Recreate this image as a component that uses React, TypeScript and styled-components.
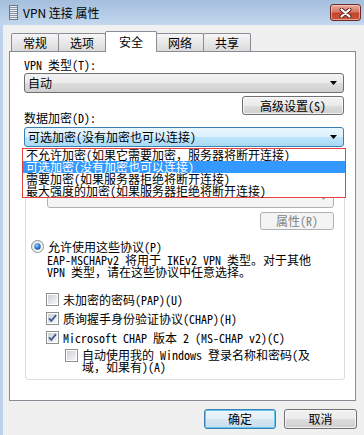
import React from "react";
import styled, { createGlobalStyle, css } from "styled-components";

const Global = createGlobalStyle`
  html, body { margin: 0; padding: 0; }
  body { width: 364px; height: 435px; overflow: hidden; background: #f0f0f0; }
  * { box-sizing: border-box; }
`;

const FONT = `"Noto Sans CJK SC", "Liberation Sans", sans-serif`;

const Window = styled.div`
  width: 364px;
  height: 435px;
  display: flex;
  flex-direction: column;
  background: #f0f0f0;
  font-family: ${FONT};
  font-size: 12px;
  line-height: 12px;
  color: #000;
  overflow: hidden;
  font-feature-settings: "hwid" 1;
`;

/* full-width punctuation keeps its full width */
const Wide = styled.span`
  font-feature-settings: normal;
`;

const TitleBar = styled.div`
  height: 25px;
  flex: none;
  display: flex;
  align-items: center;
  padding-left: 9px;
  background: linear-gradient(#a4bedd, #c3d8ee);
`;

const TitleText = styled.span`
  margin-left: 5px;
  font-size: 12px;
  line-height: 14px;
  font-feature-settings: normal;
  color: #000;
`;

const CloseButton = styled.div`
  margin-left: auto;
  margin-right: 3px;
  width: 31px;
  height: 17px;
  border: 1px solid #6b2b24;
  border-radius: 3px;
  display: flex;
  align-items: center;
  justify-content: center;
  background: linear-gradient(#e8aa9c 0%, #d47a66 45%, #c2452e 55%, #c9553a 100%);
  box-shadow: inset 0 0 0 1px rgba(255, 220, 210, 0.55);
`;

const Body = styled.div`
  flex: 1;
  display: flex;
  flex-direction: column;
  border-left: 3px solid #bdd3ec;
  padding: 6px 0 0 6px;
`;

const TabRow = styled.div`
  display: flex;
  align-items: flex-end;
  height: 20px;
  padding-left: 2px;
  position: relative;
  z-index: 2;
`;

const Tab = styled.div<{ $active?: boolean }>`
  width: 48px;
  height: 18px;
  margin-left: -1px;
  border: 1px solid #898c95;
  border-bottom: none;
  border-radius: 2px 2px 0 0;
  display: flex;
  align-items: center;
  justify-content: center;
  padding-top: 1px;
  background: linear-gradient(#f6f6f6, #dadada);
  &:first-child { margin-left: 0; }
  ${(p) =>
    p.$active &&
    css`
      width: 52px;
      height: 21px;
      margin-bottom: -1px;
      padding-top: 0;
      padding-bottom: 1px;
      background: #fff;
    `}
`;

const Panel = styled.div`
  width: 347px;
  height: 350px;
  flex: none;
  border: 1px solid #898c95;
  background: #fff;
  padding: 7px 11px 0 14px;
  display: flex;
  flex-direction: column;
  position: relative;
  z-index: 1;
`;

const Label = styled.div<{ $gap?: number }>`
  height: 12px;
  white-space: nowrap;
  margin-top: ${(p) => p.$gap ?? 0}px;
`;

const Combo = styled.div<{ $gap?: number; $variant?: "normal" | "focused" | "disabled" }>`
  height: 20px;
  border-radius: 3px;
  display: flex;
  align-items: center;
  padding: 0 6px 0 3px;
  white-space: nowrap;
  margin-top: ${(p) => p.$gap ?? 0}px;
  border: 1px solid #707070;
  background: linear-gradient(#f2f2f2 0%, #ebebeb 50%, #dddddd 50%, #cfcfcf 100%);
  ${(p) =>
    p.$variant === "focused" &&
    css`
      border-color: #3c7fb1;
      background: linear-gradient(#eaf6fd 0%, #d9f0fc 50%, #bee6fd 50%, #a7d9f5 100%);
    `}
  ${(p) =>
    p.$variant === "disabled" &&
    css`
      margin-left: 16px;
      margin-right: 10px;
      border-color: #adb2b5;
      background: #f4f4f4;
      color: #838383;
    `}
`;

const ComboText = styled.span`
  flex: 1;
`;

const Button = styled.div<{ $width: number; $height?: number; $disabled?: boolean; $default?: boolean }>`
  width: ${(p) => p.$width}px;
  height: ${(p) => p.$height ?? 20}px;
  flex: none;
  border: 1px solid #707070;
  border-radius: 3px;
  display: flex;
  align-items: center;
  justify-content: center;
  white-space: nowrap;
  background: linear-gradient(#f2f2f2 0%, #ebebeb 50%, #dddddd 50%, #cfcfcf 100%);
  box-shadow: inset 0 0 0 1px rgba(255, 255, 255, 0.7);
  ${(p) =>
    p.$disabled &&
    css`
      border-color: #adb2b5;
      background: #f4f4f4;
      color: #838383;
      box-shadow: none;
    `}
  ${(p) =>
    p.$default &&
    css`
      border-color: #3c7fb1;
      background: linear-gradient(#eef6fb 0%, #e3eff7 50%, #d4e6f2 50%, #c8ddeb 100%);
      box-shadow: inset 0 0 0 1px #60c8f4;
    `}
`;

const RightRow = styled.div<{ $gap?: number; $inset?: number }>`
  display: flex;
  justify-content: flex-end;
  margin-top: ${(p) => p.$gap ?? 0}px;
  margin-right: ${(p) => p.$inset ?? 0}px;
`;

const ComboWrap = styled.div<{ $gap?: number }>`
  position: relative;
  margin-top: ${(p) => p.$gap ?? 0}px;
`;

const DropList = styled.div`
  position: absolute;
  top: calc(100% + 1px);
  left: -2px;
  right: -2px;
  z-index: 10;
  background: #fff;
  border: 1px solid #e8413f;
  display: flex;
  flex-direction: column;
`;

const DropItem = styled.div<{ $selected?: boolean }>`
  height: 12px;
  padding-left: 3px;
  white-space: nowrap;
  ${(p) =>
    p.$selected &&
    css`
      background: #3399ff;
      color: #fff;
    `}
`;

const GroupBox = styled.div`
  margin: 3px -1px 0 1px;
  border: 1px solid #d5dfe5;
  border-radius: 3px;
  padding: 18px 0 6px 5px;
  display: flex;
  flex-direction: column;
`;

const OptionRow = styled.div<{ $gap?: number; $indent?: number }>`
  display: flex;
  align-items: flex-start;
  gap: 4px;
  margin-top: ${(p) => p.$gap ?? 0}px;
  margin-left: ${(p) => p.$indent ?? 0}px;
  white-space: nowrap;
  line-height: 12px;
  & > svg { flex: none; }
`;

const OptionText = styled.span<{ $lines?: number }>`
  padding-top: ${(p) => ((p.$lines ?? 1) > 1 ? 0 : 1)}px;
`;

const Description = styled.div<{ $gap?: number }>`
  margin: ${(p) => p.$gap ?? 0}px 0 0 16px;
  line-height: 12px;
  white-space: nowrap;
`;

const Footer = styled.div`
  display: flex;
  justify-content: flex-end;
  gap: 8px;
  margin-top: 8px;
  padding-right: 7px;
`;

const Arrow = ({ color = "#000" }: { color?: string }) => (
  <svg width="7" height="4" viewBox="0 0 7 4">
    <path d="M0 0 H7 L3.5 4 Z" fill={color} />
  </svg>
);

const Radio = ({ checked }: { checked?: boolean }) => (
  <svg width="13" height="13" viewBox="0 0 13 13">
    <defs>
      <linearGradient id="rbg" x1="0" y1="0" x2="1" y2="1">
        <stop offset="0" stopColor="#e4e4e4" />
        <stop offset="1" stopColor="#ffffff" />
      </linearGradient>
      <radialGradient id="rdot" cx="0.4" cy="0.35" r="0.7">
        <stop offset="0" stopColor="#8ad0ff" />
        <stop offset="0.6" stopColor="#2d7bd0" />
        <stop offset="1" stopColor="#134c94" />
      </radialGradient>
    </defs>
    <circle cx="6.5" cy="6.5" r="6" fill="url(#rbg)" stroke="#8e8f8f" />
    {checked && <circle cx="6.5" cy="6.5" r="3.2" fill="url(#rdot)" />}
  </svg>
);

const Check = ({ checked }: { checked?: boolean }) => (
  <svg width="13" height="13" viewBox="0 0 13 13">
    <defs>
      <linearGradient id="cbg" x1="0" y1="0" x2="1" y2="1">
        <stop offset="0" stopColor="#cbcfd5" />
        <stop offset="1" stopColor="#f7f7f7" />
      </linearGradient>
    </defs>
    <rect x="0.5" y="0.5" width="12" height="12" fill="#fff" stroke="#8e8f8f" />
    <rect x="2" y="2" width="9" height="9" fill="url(#cbg)" />
    {checked && (
      <path d="M3 6.3 L5.3 8.8 L10 3.2" fill="none" stroke="#3f5c95" strokeWidth="1.8" />
    )}
  </svg>
);

const AppIcon = () => (
  <svg width="9" height="15" viewBox="0 0 9 15">
    <rect x="0.5" y="0.5" width="8" height="14" fill="#e8ecf0" stroke="#6f7782" />
    {[2, 4, 6, 8, 10, 12].map((y) => (
      <rect key={y} x="1" y={y} width="7" height="1" fill="#8d96a3" />
    ))}
  </svg>
);

const CloseGlyph = () => (
  <svg width="13" height="10" viewBox="0 0 13 10">
    <path d="M2.5 1.5 L10.5 8.5 M10.5 1.5 L2.5 8.5" stroke="#5b231b" strokeWidth="4" strokeLinecap="round" />
    <path d="M2.5 1.5 L10.5 8.5 M10.5 1.5 L2.5 8.5" stroke="#fff" strokeWidth="2.2" strokeLinecap="round" />
  </svg>
);

const tabs = ["常规", "选项", "安全", "网络", "共享"];

const encryptionOptions: React.ReactNode[] = [
  <>不允许加密(如果它需要加密<Wide>，</Wide>服务器将断开连接)</>,
  <>可选加密(没有加密也可以连接)</>,
  <>需要加密(如果服务器拒绝将断开连接)</>,
  <>最大强度的加密(如果服务器拒绝将断开连接)</>,
];

export default function App() {
  return (
    <>
      <Global />
      <Window>
        <TitleBar>
          <AppIcon />
          <TitleText>VPN 连接 属性</TitleText>
          <CloseButton>
            <CloseGlyph />
          </CloseButton>
        </TitleBar>
        <Body>
          <TabRow>
            {tabs.map((t) => (
              <Tab key={t} $active={t === "安全"}>
                {t}
              </Tab>
            ))}
          </TabRow>
          <Panel>
            <Label>VPN 类型(T):</Label>
            <Combo $gap={2}>
              <ComboText>自动</ComboText>
              <Arrow />
            </Combo>
            <RightRow $gap={3}>
              <Button $width={102} $height={19}>高级设置(S)</Button>
            </RightRow>
            <Label $gap={-3}>数据加密(D):</Label>
            <ComboWrap $gap={3}>
              <Combo $variant="focused">
                <ComboText>可选加密(没有加密也可以连接)</ComboText>
                <Arrow />
              </Combo>
              <DropList>
                {encryptionOptions.map((o, i) => (
                  <DropItem key={i} $selected={i === 1}>
                    {o}
                  </DropItem>
                ))}
              </DropList>
            </ComboWrap>
            <GroupBox>
              <OptionRow>
                <Radio />
                <OptionText>使用可扩展的身份验证协议(EAP)(E)</OptionText>
              </OptionRow>
              <Combo $variant="disabled" $gap={6}>
                <ComboText />
                <Arrow color="#a6a6a6" />
              </Combo>
              <RightRow $gap={4} $inset={10}>
                <Button $width={74} $height={18} $disabled>
                  属性(R)
                </Button>
              </RightRow>
              <OptionRow $gap={10}>
                <Radio checked />
                <OptionText>允许使用这些协议(P)</OptionText>
              </OptionRow>
              <Description $gap={1}>
                EAP-MSCHAPv2 将用于 IKEv2 VPN 类型<Wide>。</Wide>对于其他
                <br />
                VPN 类型<Wide>，</Wide>请在这些协议中任意选择<Wide>。</Wide>
              </Description>
              <OptionRow $gap={15} $indent={15}>
                <Check />
                <OptionText>未加密的密码(PAP)(U)</OptionText>
              </OptionRow>
              <OptionRow $gap={6} $indent={15}>
                <Check checked />
                <OptionText>质询握手身份验证协议(CHAP)(H)</OptionText>
              </OptionRow>
              <OptionRow $gap={6} $indent={15}>
                <Check checked />
                <OptionText>Microsoft CHAP 版本 2 (MS-CHAP v2)(C)</OptionText>
              </OptionRow>
              <OptionRow $gap={5} $indent={34}>
                <Check />
                <OptionText $lines={2}>
                  自动使用我的 Windows 登录名称和密码(及
                  <br />
                  域<Wide>，</Wide>如果有)(A)
                </OptionText>
              </OptionRow>
            </GroupBox>
          </Panel>
          <Footer>
            <Button $width={72} $default>确定</Button>
            <Button $width={73}>取消</Button>
          </Footer>
        </Body>
      </Window>
    </>
  );
}
